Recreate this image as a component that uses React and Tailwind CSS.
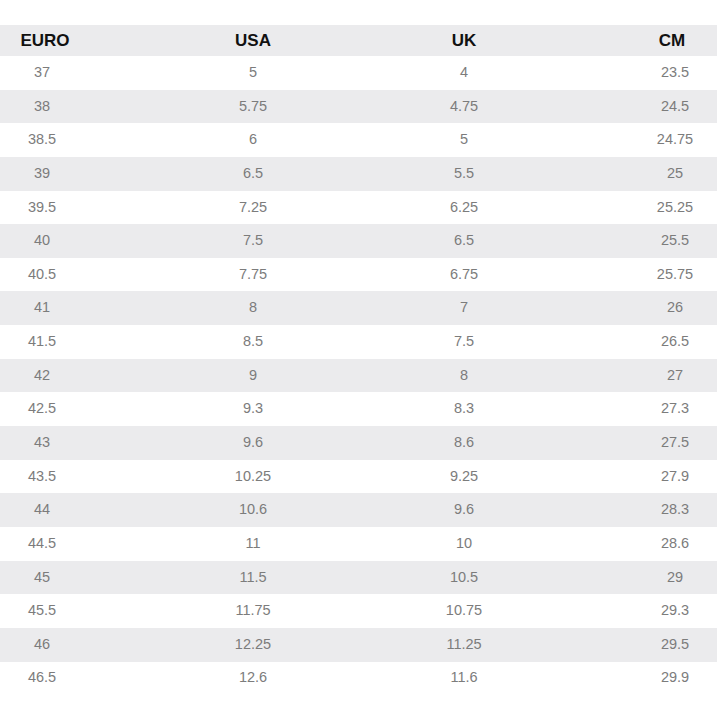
import React from "react";

const rows = [
  ["37", "5", "4", "23.5"],
  ["38", "5.75", "4.75", "24.5"],
  ["38.5", "6", "5", "24.75"],
  ["39", "6.5", "5.5", "25"],
  ["39.5", "7.25", "6.25", "25.25"],
  ["40", "7.5", "6.5", "25.5"],
  ["40.5", "7.75", "6.75", "25.75"],
  ["41", "8", "7", "26"],
  ["41.5", "8.5", "7.5", "26.5"],
  ["42", "9", "8", "27"],
  ["42.5", "9.3", "8.3", "27.3"],
  ["43", "9.6", "8.6", "27.5"],
  ["43.5", "10.25", "9.25", "27.9"],
  ["44", "10.6", "9.6", "28.3"],
  ["44.5", "11", "10", "28.6"],
  ["45", "11.5", "10.5", "29"],
  ["45.5", "11.75", "10.75", "29.3"],
  ["46", "12.25", "11.25", "29.5"],
  ["46.5", "12.6", "11.6", "29.9"],
];

export default function App() {
  return (
    <div
      className="w-[717px] h-[717px] bg-white pt-[25px] overflow-hidden"
      style={{ fontFamily: '"Liberation Sans", Arial, sans-serif' }}
    >
      <div className="grid grid-cols-[80px_80px_80px_80px] gap-x-[131px] pl-[2px] h-[31px] items-center bg-[#ebebed] text-[17px] font-bold text-[#111]">
        <div className="text-center pl-[6px]">EURO</div>
        <div className="text-center">USA</div>
        <div className="text-center">UK</div>
        <div className="text-center pr-[6px]">CM</div>
      </div>
      {rows.map((r, i) => (
        <div
          key={r[0]}
          className={`grid grid-cols-[80px_80px_80px_80px] gap-x-[131px] pl-[2px] h-[33.65px] items-center text-[14.5px] text-[#7c7c7c] ${
            i % 2 === 1 ? "bg-[#ebebed]" : "bg-white"
          }`}
        >
          {r.map((c, j) => (
            <div key={j} className="text-center">
              {c}
            </div>
          ))}
        </div>
      ))}
    </div>
  );
}
